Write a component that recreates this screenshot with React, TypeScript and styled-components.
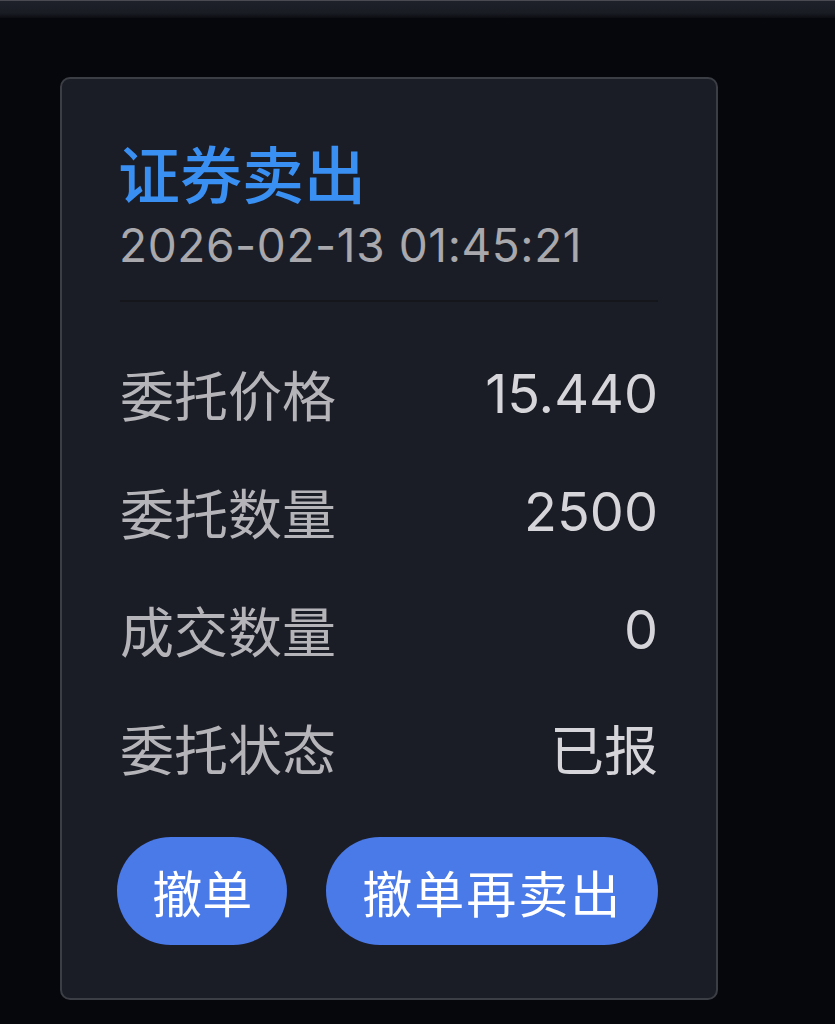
import React from "react";
import styled, { createGlobalStyle } from "styled-components";

const GlobalStyle = createGlobalStyle`
  html, body {
    margin: 0;
    padding: 0;
    background: #06070c;
  }
  body {
    font-family: Inter, "Noto Sans CJK SC", sans-serif;
    -webkit-font-smoothing: antialiased;
  }
`;

const rows = [
  { label: "委托价格", value: "15.440" },
  { label: "委托数量", value: "2500" },
  { label: "成交数量", value: "0" },
  { label: "委托状态", value: "已报" },
];

const App = () => {
  return (
    <>
      <GlobalStyle />
      <Page>
        <TopBar />
        <Content>
          <Card>
            <Title>证券卖出</Title>
            <DateText>2026-02-13 01:45:21</DateText>
            <Divider />
            <List>
              {rows.map((r) => (
                <Row key={r.label}>
                  <Label>{r.label}</Label>
                  <Value>{r.value}</Value>
                </Row>
              ))}
            </List>
            <Actions>
              <PillButton $width={171}>撤单</PillButton>
              <PillButton $width={333} $spacing={2}>
                撤单再卖出
              </PillButton>
            </Actions>
          </Card>
        </Content>
      </Page>
    </>
  );
};

export default App;

const Page = styled.div`
  width: 835px;
  height: 1024px;
  display: flex;
  flex-direction: column;
  background: #06070c;
  overflow: hidden;
`;

const TopBar = styled.div`
  height: 18px;
  flex-shrink: 0;
  border-top: 1px solid #4a4b52;
  box-sizing: border-box;
  background: linear-gradient(to bottom, #1f212a 0%, #1a1c24 70%, #0c0d12 100%);
`;

const Content = styled.div`
  padding: 59px 0 0 60px;
`;

const Card = styled.div`
  width: 658px;
  height: 923px;
  box-sizing: border-box;
  border: 2px solid #3c3e45;
  border-radius: 10px;
  background: #1b1d26;
  padding: 57px 58px 0 58px;
  display: flex;
  flex-direction: column;
`;

const Title = styled.div`
  font-family: "Noto Sans CJK SC", sans-serif;
  font-size: 62px;
  line-height: 72px;
  color: #3a8ff2;
  font-weight: 500;
  margin-left: -2px;
`;

const DateText = styled.div`
  margin-top: 11px;
  font-size: 46px;
  line-height: 52px;
  letter-spacing: 0.6px;
  color: #a8a8ad;
  margin-left: -1px;
`;

const Divider = styled.div`
  margin-top: 29px;
  height: 2px;
  background: #14161c;
`;

const List = styled.div`
  margin-top: 32px;
  display: flex;
  flex-direction: column;
`;

const Row = styled.div`
  height: 118px;
  display: flex;
  align-items: center;
  justify-content: space-between;
`;

const Label = styled.span`
  font-family: "Noto Sans CJK SC", sans-serif;
  font-size: 54px;
  color: #b4b4b9;
`;

const Value = styled.span`
  font-size: 54px;
  color: #d6d6da;
`;

const Actions = styled.div`
  margin-top: 31px;
  display: flex;
  gap: 39px;
  margin-left: -3px;
`;

const PillButton = styled.button<{ $width: number; $spacing?: number }>`
  width: ${(p) => p.$width}px;
  height: 108px;
  padding: 0;
  display: flex;
  align-items: center;
  justify-content: center;
  border: none;
  border-radius: 54px;
  background: #4a79e8;
  color: #ffffff;
  font-family: "Noto Sans CJK SC", sans-serif;
  font-size: 50px;
  letter-spacing: ${(p) => p.$spacing ?? 0}px;
  line-height: 1;
  cursor: pointer;
`;
